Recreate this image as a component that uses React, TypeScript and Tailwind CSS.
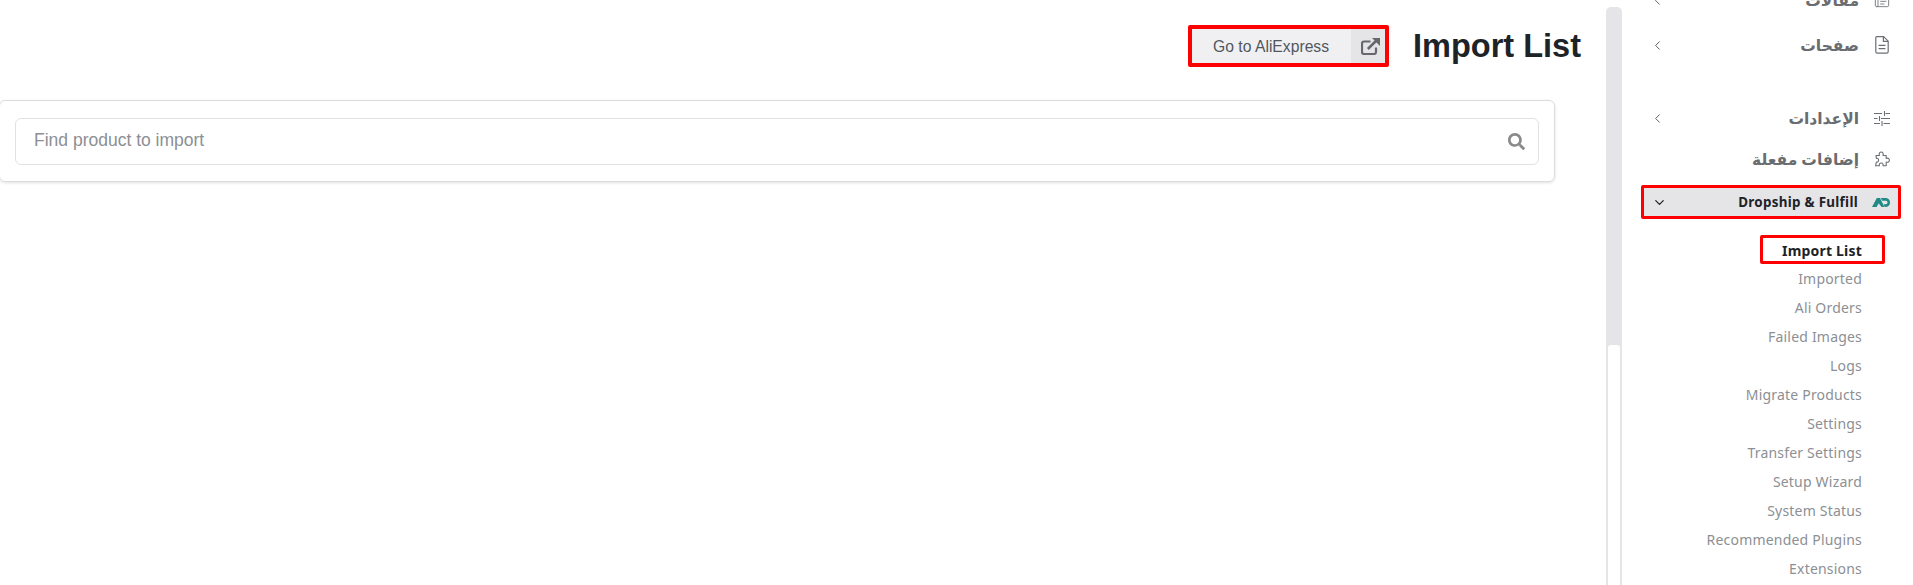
import { ChevronDown, ChevronLeft, Newspaper } from 'lucide-react';
import { FaSearch } from 'react-icons/fa';

const subItems = [
  'Imported',
  'Ali Orders',
  'Failed Images',
  'Logs',
  'Migrate Products',
  'Settings',
  'Transfer Settings',
  'Setup Wizard',
  'System Status',
  'Recommended Plugins',
  'Extensions',
];

function DropshipLogo() {
  return (
    <svg width="18" height="9" viewBox="0 0 18 9" className="shrink-0">
      <path d="M0 9 L4.8 0 H8 L12.5 9 H9.6 L6.6 5.2 L4.6 9 Z" fill="#1f8a86" />
      <path d="M8.8 0 H14 C16.6 0 18 2.2 18 4.5 C18 6.8 16.6 9 14 9 H12.8 L11.6 6.2 H13.8 C14.8 6.2 15.5 5.5 15.5 4.5 C15.5 3.5 14.8 2.8 13.8 2.8 H10.2 Z" fill="#1f8a86" />
    </svg>
  );
}

function FileIcon() {
  return (
    <svg width="14" height="18" viewBox="0 0 14 18" fill="none" stroke="#6b6f73" strokeWidth="1.2">
      <path d="M1.6 0.6 H8.6 L13.2 5.2 V15.6 C13.2 16.6 12.6 17.2 11.6 17.2 H2.4 C1.4 17.2 0.8 16.6 0.8 15.6 V1.4 Z" />
      <path d="M8.4 0.8 V5.4 H13" />
      <path d="M3.6 9.4 H10.4 M3.6 12.6 H10.4" />
    </svg>
  );
}

function SlidersIcon() {
  return (
    <svg width="16" height="15" viewBox="0 0 16 15" fill="none" stroke="#6b6f73" strokeWidth="1.1">
      <path d="M0 2.5 H8 M11.5 2.5 H16 M10.5 0 V5" />
      <path d="M0 7.5 H3.5 M7 7.5 H16 M5.5 5 V10" />
      <path d="M0 12.5 H6 M9.5 12.5 H16 M8 10 V15" />
    </svg>
  );
}

function PuzzleIcon() {
  return (
    <svg width="16" height="16" viewBox="0 0 16 16" fill="none" stroke="#6b6f73" strokeWidth="1.1" strokeLinejoin="round">
      <path d="M2 4.5 H5.4 C4.6 2.4 5.8 1 7.2 1 C8.6 1 9.8 2.4 9 4.5 H12.2 V7.4 C14 6.6 15.4 7.8 15.4 9.2 C15.4 10.6 14 11.8 12.2 11 V14.8 H9 C9.6 13 8.6 12 7.2 12 C5.8 12 4.8 13 5.4 14.8 H1.6 L2.4 11 C3.6 11.4 4.6 10.4 4.6 9.2 C4.6 8 3.6 7 2.4 7.4 Z" />
    </svg>
  );
}

function ExternalIcon() {
  return (
    <svg width="19" height="17" viewBox="0 0 19 17" fill="none" stroke="#66686b" strokeWidth="2.2">
      <path d="M15 9.5 V14 C15 15.2 14.2 16 13 16 H3 C1.8 16 1 15.2 1 14 V5.5 C1 4.3 1.8 3.5 3 3.5 H9.5" />
      <path d="M6.8 11 L16 2" strokeWidth="2.6" />
      <path d="M11 0 H19 V8 Z" fill="#66686b" stroke="none" />
    </svg>
  );
}

function MenuRow({ icon, label, chevron = true, className = '' }: { icon: React.ReactNode; label: string; chevron?: boolean; className?: string }) {
  return (
    <div className={`flex items-center h-[30px] pr-[22px] pl-[28px] text-[15.5px] font-semibold text-[#6a6d70] ${className}`}>
      <span className="w-[18px] flex justify-center shrink-0">{icon}</span>
      <span className="mr-[14px] flex-1 pt-[2px]">{label}</span>
      {chevron && <ChevronLeft size={15} strokeWidth={1.5} className="text-[#555]" />}
    </div>
  );
}

export default function App() {
  return (
    <div className="flex h-[585px] w-[1913px] overflow-hidden bg-white">
      {/* Main content */}
      <main className="w-[1606px] shrink-0 font-['Liberation_Sans',Arial,sans-serif]">
        <div className="flex items-center justify-end h-[93px] pr-[25px] pb-[1px]">
          <a className="flex items-stretch h-[42px] w-[201px] border-[4px] border-[#fe0000] rounded-[2px] bg-[#f0f0f3] text-[#50575e] text-[15.7px]">
            <span className="flex-1 flex items-center pl-[21px] pt-[2px]">Go to AliExpress</span>
            <span className="w-[34px] bg-[#e5e5e8] flex items-center justify-center pl-[4px]">
              <ExternalIcon />
            </span>
          </a>
          <h1 className="ml-[24px] text-[32.5px] font-bold text-[#1d2327] leading-none">Import List</h1>
        </div>

        <div className="-ml-px mt-[7px] w-[1556px] h-[82px] border border-[#dcdcde] rounded-[6px] shadow-[0_1px_3px_rgba(0,0,0,0.12)] px-[15px] pt-[17px]">
          <div className="flex items-center justify-between h-[47px] border border-[#e2e2e4] rounded-[6px] pl-[18px] pr-[13px]">
            <span className="text-[17.5px] text-[#8c8f94] pb-[2px]">Find product to import</span>
            <FaSearch size={17} className="text-[#8a8a8a]" />
          </div>
        </div>
      </main>

      {/* Scrollbar */}
      <div className="w-[16px] shrink-0 mt-[7px] bg-[#e5e5e8] rounded-t-[5px] px-[2px] pt-[338px]">
        <div className="h-full bg-white rounded-t-[3px]" />
      </div>

      {/* Sidebar */}
      <aside dir="rtl" className="flex-1 font-['Noto_Sans','DejaVu_Sans',sans-serif]">
        <div className="-mt-[15px]">
          <MenuRow icon={<Newspaper size={16} strokeWidth={1.3} className="text-[#6b6f73]" />} label="مقالات" />
          <MenuRow icon={<FileIcon />} label="صفحات" className="mt-[15px]" />
          <MenuRow icon={<SlidersIcon />} label="الإعدادات" className="mt-[43px]" />
          <MenuRow icon={<PuzzleIcon />} label="إضافات مفعلة" chevron={false} className="mt-[11px]" />
        </div>

        <div className="mt-[11px] mr-[12px] ml-[19px] h-[34px] border-[3px] border-[#fe0000] rounded-[2px] bg-[#e5e5e8] flex items-center pr-[8px] pl-[8px]">
          <DropshipLogo />
          <span dir="ltr" className="mr-[14px] flex-1 text-right text-[13.4px] font-bold text-[#1d2327] tracking-[0.3px]">Dropship &amp; Fulfill</span>
          <ChevronDown size={15} strokeWidth={2} className="text-[#222]" />
        </div>

        <ul dir="ltr" className="mt-[16px] text-right text-[14px] text-[#8c8f94] tracking-[0.2px]">
          <li className="h-[29px] ml-[138px] mr-[28px] border-[3px] border-[#fe0000] rounded-[2px] pr-[20px] pt-[1px] flex items-center justify-end font-bold text-[14px] text-[#1d2327]">Import List</li>
          {subItems.map((item) => (
            <li key={item} className="h-[29px] pr-[51px] flex items-center justify-end">{item}</li>
          ))}
        </ul>
      </aside>
    </div>
  );
}
